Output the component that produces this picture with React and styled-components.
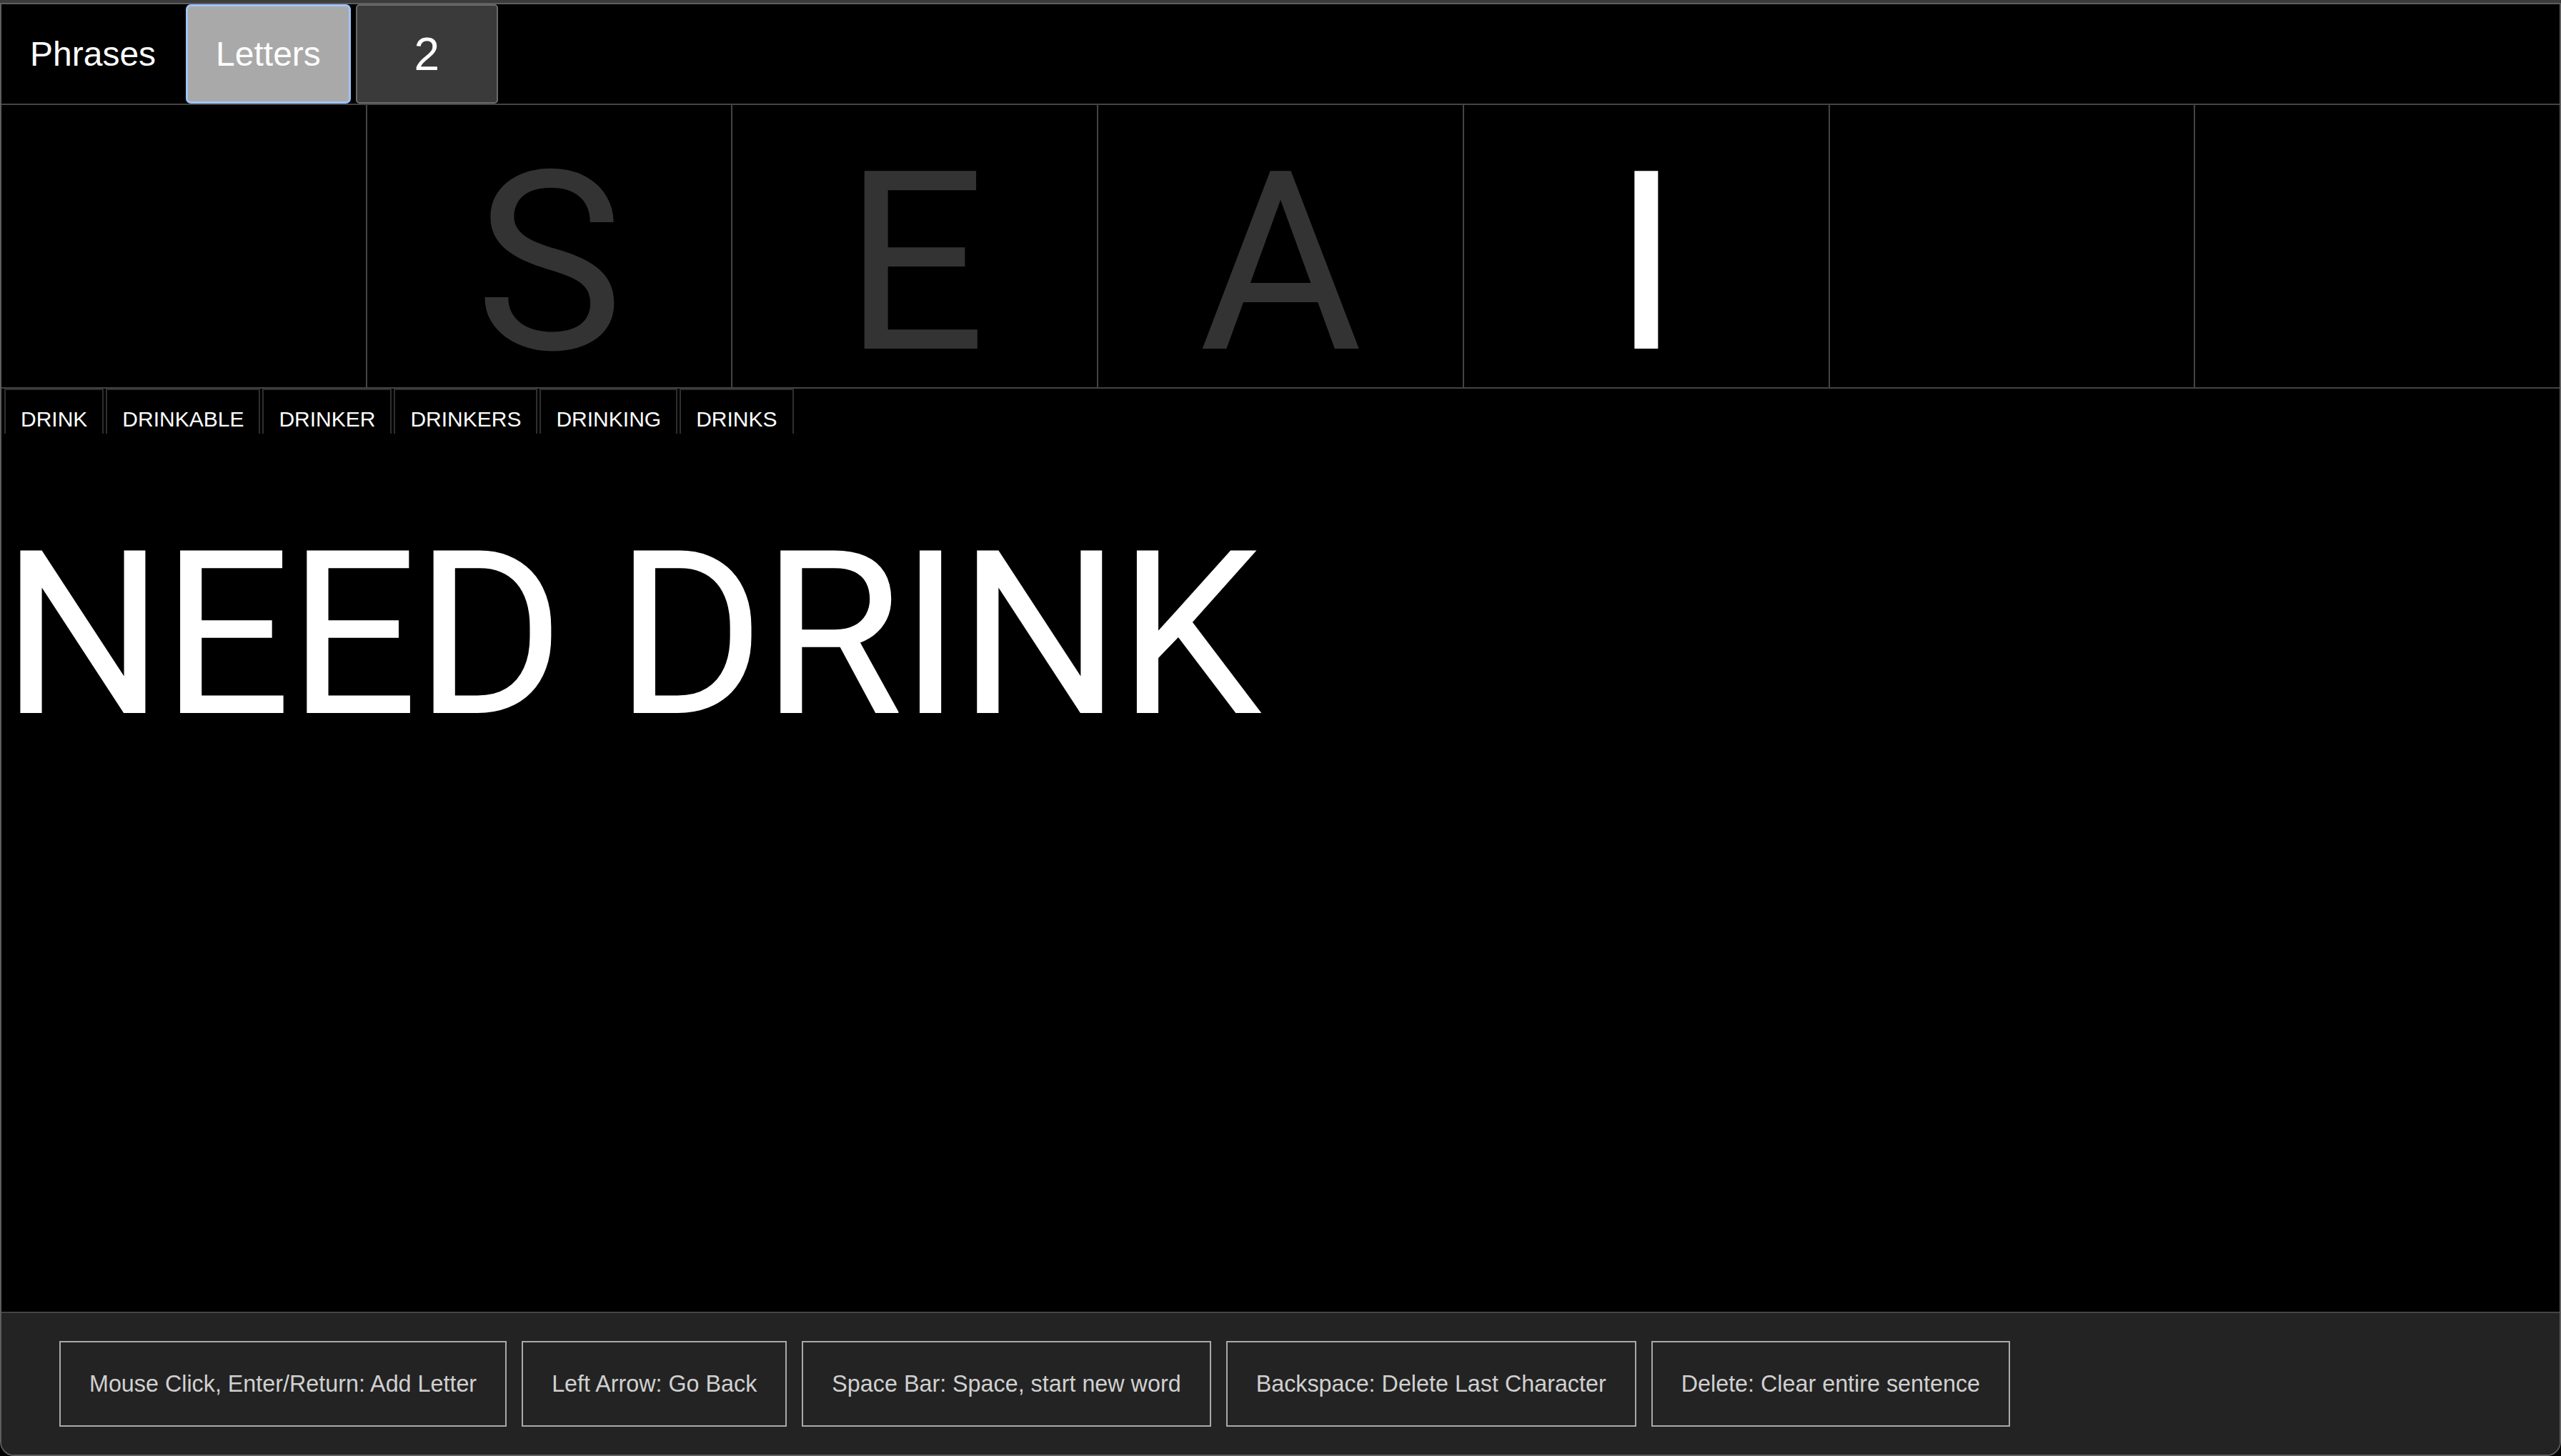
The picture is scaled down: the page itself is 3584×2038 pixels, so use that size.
import React from "react";
import styled, { createGlobalStyle } from "styled-components";

const GlobalStyle = createGlobalStyle`
  html, body {
    margin: 0;
    padding: 0;
    background: #000;
    overflow: hidden;
  }
  * {
    box-sizing: border-box;
  }
`;

const TitleEdge = styled.div`
  height: 4px;
  background: #3b3b3b;
`;

const Frame = styled.div`
  height: calc(100vh - 4px);
  display: flex;
  flex-direction: column;
  background: #000;
  border: 2px solid #5e5e5e;
  border-radius: 0 0 20px 20px;
  overflow: hidden;
`;

const TopBar = styled.div`
  display: flex;
  align-items: stretch;
  height: 139px;
  gap: 7px;
`;

const ModeButton = styled.button`
  display: flex;
  align-items: center;
  justify-content: center;
  height: 100%;
  margin: 0;
  font-family: "Liberation Sans", Arial, sans-serif;
  font-size: ${(p) => (p.$big ? "64px" : "48px")};
  color: #fff;
  cursor: pointer;
  ${(p) =>
    p.$variant === "active" &&
    `
    background: #a9a9a9;
    border: 3px solid #9dc4f6;
    border-radius: 7px;
    padding: 0 39px;
  `}
  ${(p) =>
    p.$variant === "dark" &&
    `
    background: #3a3a3a;
    border: 2px solid #6a6a6a;
    border-radius: 5px;
    width: 199px;
    padding: 0;
  `}
  ${(p) =>
    p.$variant === "plain" &&
    `
    background: transparent;
    border: none;
    padding: 0 35px 0 40px;
  `}
`;

const LetterRow = styled.div`
  display: grid;
  grid-template-columns: repeat(7, 1fr);
  gap: 2px;
  background: #444;
  border-top: 2px solid #444;
  border-bottom: 2px solid #444;
`;

const LetterCell = styled.div`
  height: 395px;
  display: flex;
  justify-content: center;
  align-items: flex-start;
  padding-top: 46px;
  background: #000;
  font-family: Roboto, "Liberation Sans", sans-serif;
  font-size: 350px;
  line-height: 1;
  color: ${(p) => (p.$current ? "#fff" : "#333")};
`;

const WordRow = styled.div`
  display: flex;
  gap: 3px;
  padding-left: 4px;
`;

const WordChip = styled.div`
  height: 63px;
  display: flex;
  align-items: flex-start;
  padding: 24px 21px 0;
  border: 2px solid #2f2f2f;
  border-bottom: none;
  font-family: "Liberation Sans", Arial, sans-serif;
  font-size: 30px;
  color: #fff;
`;

const Sentence = styled.div`
  flex: 1;
  padding-top: 122px;
  font-family: Roboto, "Liberation Sans", sans-serif;
  font-size: 320px;
  letter-spacing: -4.6px;
  line-height: 1;
  color: #fff;
  white-space: nowrap;
`;

const HelpBar = styled.div`
  display: flex;
  gap: 21px;
  padding: 39px 81px;
  background: #232323;
  border-top: 2px solid #444;
`;

const HelpButton = styled.button`
  height: 120px;
  margin: 0;
  padding: 0 40px;
  background: transparent;
  border: 2px solid #a9a9a9;
  color: #d0d0d0;
  font-family: "Liberation Sans", Arial, sans-serif;
  font-size: 32.3px;
  white-space: nowrap;
`;

const letters = ["", "S", "E", "A", "I", "", ""];
const currentIndex = 4;
const suggestions = ["DRINK", "DRINKABLE", "DRINKER", "DRINKERS", "DRINKING", "DRINKS"];
const helpItems = [
  "Mouse Click, Enter/Return: Add Letter",
  "Left Arrow: Go Back",
  "Space Bar: Space, start new word",
  "Backspace: Delete Last Character",
  "Delete: Clear entire sentence",
];

const App = () => {
  return (
    <>
      <GlobalStyle />
      <TitleEdge />
      <Frame>
        <TopBar>
          <ModeButton $variant="plain">Phrases</ModeButton>
          <ModeButton $variant="active">Letters</ModeButton>
          <ModeButton $variant="dark" $big>
            2
          </ModeButton>
        </TopBar>
        <LetterRow>
          {letters.map((letter, i) => (
            <LetterCell key={i} $current={i === currentIndex}>
              {letter}
            </LetterCell>
          ))}
        </LetterRow>
        <WordRow>
          {suggestions.map((word) => (
            <WordChip key={word}>{word}</WordChip>
          ))}
        </WordRow>
        <Sentence>NEED DRINK</Sentence>
        <HelpBar>
          {helpItems.map((item) => (
            <HelpButton key={item}>{item}</HelpButton>
          ))}
        </HelpBar>
      </Frame>
    </>
  );
};

export default App;
